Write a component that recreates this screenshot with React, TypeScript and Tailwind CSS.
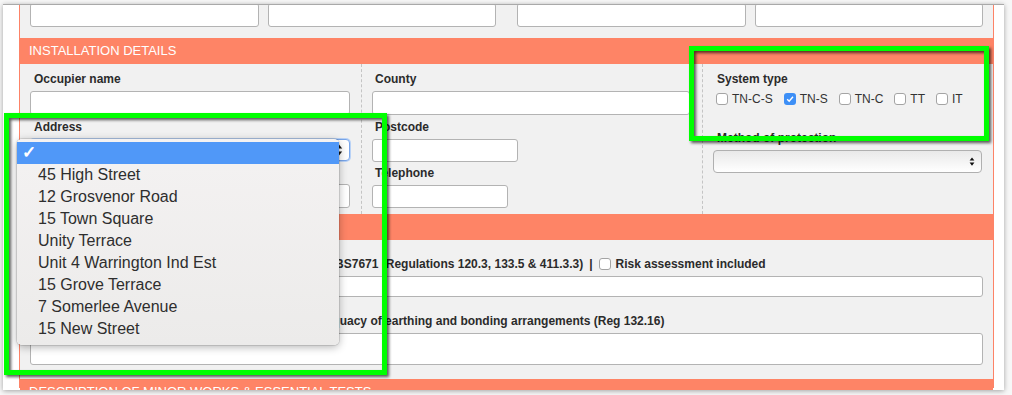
function UpDown({ className }: { className?: string }) {
  return (
    <svg viewBox="0 0 8 14" aria-hidden className={className}>
      <path d="M4 1.5 7.2 5.6H.8zM4 12.5.8 8.4h6.4z" fill="#111" />
    </svg>
  );
}

function Box({ label, checked }: { label: string; checked?: boolean }) {
  return (
    <span className="flex items-center gap-[4px]">
      {checked ? (
        <span className="flex h-[12px] w-[12px] items-center justify-center rounded-[3px] bg-[#3d8ff6]">
          <svg viewBox="0 0 12 12" aria-hidden className="h-[10px] w-[10px]">
            <path d="M2.6 6.3 5 8.6l4.6-5.2" fill="none" stroke="#fff" strokeWidth="1.7" />
          </svg>
        </span>
      ) : (
        <span className="h-[12px] w-[12px] rounded-[3px] border border-[#a4a4a4] bg-white" />
      )}
      {label}
    </span>
  );
}

const field = "rounded-[3px] border border-[#b3b3b3] bg-white";
const label = "text-[12px] leading-[14px] font-bold text-[#2b2b2b]";

const addresses = [
  "45 High Street",
  "12 Grosvenor Road",
  "15 Town Square",
  "Unity Terrace",
  "Unit 4 Warrington Ind Est",
  "15 Grove Terrace",
  "7 Somerlee Avenue",
  "15 New Street",
];

export default function App() {
  return (
    <div className="relative h-[395px] w-[1012px] overflow-hidden bg-[#f7f7f7] pl-[3px] pt-[4px] font-['Liberation_Sans',Arial,Helvetica,sans-serif]">
      {/* fenêtre capturée */}
      <div className="h-[386px] w-[1001px] overflow-hidden border-t border-[#a9a9a9] bg-white shadow-[0_1px_5px_rgba(0,0,0,0.35)]">
        <div className="ml-[16px] h-full w-[975px] border-x border-[#fd8367] bg-[#f1f1f1]">
          <div className="-mt-[2px] flex gap-[21px] px-[10px]">
            <div className="flex flex-1 gap-[9px]">
              <div className={`h-[24px] flex-1 ${field}`} />
              <div className={`h-[24px] flex-1 ${field}`} />
            </div>
            <div className="flex flex-1 gap-[9px]">
              <div className={`h-[24px] flex-1 ${field}`} />
              <div className={`h-[24px] flex-1 ${field}`} />
            </div>
          </div>

          <div className="mt-[11px] flex h-[26px] items-center bg-[#fe8466] pl-[9px] text-[13px] text-white">
            INSTALLATION DETAILS
          </div>

          <div className="grid h-[150px] grid-cols-[342px_341px_1fr]">
            <div className="border-r border-dashed border-[#c4c4c4] pl-[10px] pt-[8px]">
              <div className={`pl-[4px] ${label}`}>Occupier name</div>
              <div className={`mt-[5px] h-[24px] w-[320px] ${field}`} />
              <div className={`mt-[5px] pl-[4px] ${label}`}>Address</div>
              <div className="mt-[5px] flex h-[22px] w-[320px] items-center justify-end rounded-[4px] border border-[#79a6ea] bg-white pr-[6px] shadow-[0_0_0_1px_#b9d2f6]">
                <UpDown className="h-[14px] w-[8px]" />
              </div>
              <div className={`mt-[5px] pl-[4px] ${label}`}>Town</div>
              <div className={`mt-[4px] h-[24px] w-[320px] ${field}`} />
            </div>
            <div className="border-r border-dashed border-[#c4c4c4] pl-[10px] pt-[8px]">
              <div className={`pl-[3px] ${label}`}>County</div>
              <div className={`mt-[5px] h-[24px] w-[318px] ${field}`} />
              <div className={`mt-[5px] pl-[3px] ${label}`}>Postcode</div>
              <div className={`mt-[5px] h-[23px] w-[146px] ${field}`} />
              <div className={`mt-[4px] pl-[3px] ${label}`}>Telephone</div>
              <div className={`mt-[5px] h-[23px] w-[136px] ${field}`} />
            </div>
            <div className="pl-[10px] pt-[8px]">
              <div className={`pl-[4px] ${label}`}>System type</div>
              <div className="mt-[6px] flex h-[14px] items-center gap-x-[11px] pl-[3px] text-[12px] text-[#333]">
                <Box label="TN-C-S" />
                <Box label="TN-S" checked />
                <Box label="TN-C" />
                <Box label="TT" />
                <Box label="IT" />
              </div>
              <div className={`mt-[25px] pl-[4px] ${label}`}>Method of protection</div>
              <div className="mt-[5px] flex h-[23px] w-[269px] items-center justify-end rounded-[4px] border border-[#b0b0b0] bg-gradient-to-b from-[#e9e9e9] to-white pr-[6px]">
                <UpDown className="h-[11px] w-[6px]" />
              </div>
            </div>
          </div>

          <div className="flex h-[26px] items-center bg-[#fe8466] pl-[9px] text-[13px] text-white">
            DEPARTURES &amp; COMMENTS
          </div>

          <div className="px-[10px]">
            <div className={`mt-[17px] flex items-center pl-[13px] ${label}`}>
              <span className="whitespace-pre">
                Details of any departures from the requirements of BS7671 (Regulations 120.3, 133.5 &amp; 411.3.3)
              </span>
              <span className="mx-[6px]">|</span>
              <span className="mr-[5px] h-[12px] w-[12px] rounded-[3px] border border-[#a4a4a4] bg-white" />
              Risk assessment included
            </div>
            <div className={`mt-[5px] h-[21px] ${field}`} />
            <div className={`mt-[17px] pl-[23px] ${label}`}>
              Comments on existing installation, including adequacy of earthing and bonding arrangements (Reg 132.16)
            </div>
            <div className={`mt-[5px] h-[32px] ${field}`} />
          </div>

          <div className="mt-[14px] flex h-[26px] items-center bg-[#fe8466] pl-[9px] text-[13px] text-white">
            DESCRIPTION OF MINOR WORKS &amp; ESSENTIAL TESTS
          </div>
        </div>
      </div>

      {/* liste déroulante ouverte */}
      <div className="absolute left-[17px] top-[139px] h-[206px] w-[322px] rounded-[5px] bg-gradient-to-b from-[#f4f2f2] to-[#ecebea] pt-[3px] shadow-[0_2px_8px_rgba(0,0,0,0.3)] ring-1 ring-black/10">
        <div className="flex h-[22px] items-center bg-[#5098f8] pl-[5px] text-[17px] font-bold text-white">✓</div>
        {addresses.map((a) => (
          <div key={a} className="flex h-[22px] items-center pl-[21px] text-[16px] text-[#2e2e2e]">
            {a}
          </div>
        ))}
      </div>

      {/* cadres verts d'annotation */}
      <div className="absolute left-[689px] top-[46px] h-[95px] w-[300px] border-[5px] border-[#00ff00] [filter:drop-shadow(2px_2px_1.5px_rgba(0,0,0,0.65))]" />
      <div className="absolute left-[4px] top-[113px] h-[262px] w-[383px] border-[5px] border-[#00ff00] [filter:drop-shadow(2px_2px_1.5px_rgba(0,0,0,0.65))]" />
    </div>
  );
}
